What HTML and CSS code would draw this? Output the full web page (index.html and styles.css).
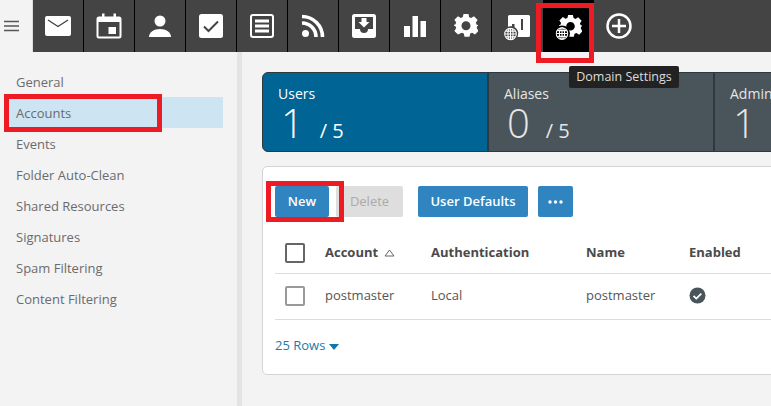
FILE: index.html
```html
<!DOCTYPE html>
<html lang="en">
<head>
<meta charset="utf-8">
<title>Domain Settings</title>
<link rel="stylesheet" href="styles.css">
</head>
<body>
<header class="topbar">
  <button class="menu" aria-label="Menu">
    <svg width="16" height="12" viewBox="0 0 16 12"><path d="M0 1.500h15M0 6h15M0 10.500h15" stroke="#555" stroke-width="1.500"/></svg>
  </button>
  <nav class="tabs">
    <a class="tab"><svg width="28" height="24" viewBox="0 0 28 24"><rect x="1" y="2" width="26" height="20" rx="2" fill="#fff"/><path d="M4 6l10 6.500L24 6" fill="none" stroke="#444" stroke-width="1.400"/></svg></a>
    <a class="tab"><svg width="28" height="28" viewBox="0 0 28 28"><path d="M4 5.500h20a1.500 1.500 0 0 1 1.500 1.500v17a1.500 1.500 0 0 1-1.500 1.500H4A1.500 1.500 0 0 1 2.500 24V7A1.500 1.500 0 0 1 4 5.500z" fill="none" stroke="#fff" stroke-width="2"/><path d="M2 6h24v4H2zM7 1.500h2.500V7H7zM18.500 1.500H21V7h-2.500z" fill="#fff"/><rect x="13.500" y="15" width="7.500" height="7" fill="#fff"/></svg></a>
    <a class="tab"><svg width="24" height="24" viewBox="0 0 24 24"><circle cx="12" cy="7" r="5.500" fill="#fff"/><path d="M1 23c0-5 5-8 11-8s11 3 11 8z" fill="#fff"/></svg></a>
    <a class="tab"><svg width="26" height="26" viewBox="0 0 26 26"><rect x="1" y="1" width="24" height="24" rx="2.500" fill="#fff"/><path d="M6 13.500l4.500 4.500L20 8.500" fill="none" stroke="#444" stroke-width="2"/></svg></a>
    <a class="tab"><svg width="26" height="26" viewBox="0 0 26 26"><rect x="2" y="2" width="22" height="22" rx="2" fill="none" stroke="#fff" stroke-width="2"/><path d="M6 6.500h14v3H6zM6 11.500h14v3H6zM6 16.500h14v3H6z" fill="#fff"/></svg></a>
    <a class="tab"><svg width="24" height="24" viewBox="0 0 24 24"><circle cx="4.500" cy="19.500" r="3.500" fill="#fff"/><path d="M1 9a14 14 0 0 1 14 14M1 2.500A20.500 20.500 0 0 1 21.500 23" fill="none" stroke="#fff" stroke-width="3.600"/></svg></a>
    <a class="tab"><svg width="26" height="26" viewBox="0 0 26 26"><path d="M3.500 1h19A2.500 2.500 0 0 1 25 3.500v19a2.500 2.500 0 0 1-2.500 2.500h-19A2.500 2.500 0 0 1 1 22.500v-19A2.500 2.500 0 0 1 3.500 1zM4 4v12h5a4 4 0 0 0 8 0h5V4z" fill="#fff" fill-rule="evenodd"/><path d="M10.500 5h5v4h3l-5.500 5.500L7.500 9h3z" fill="#fff"/></svg></a>
    <a class="tab"><svg width="24" height="24" viewBox="0 0 24 24"><path d="M1 12h6v11H1zM9.500 2h5.500v21H9.500zM17.500 7h5.500v16h-5.500z" fill="#fff"/></svg></a>
    <a class="tab"><svg width="24" height="24" viewBox="0 0 24 24"><use href="#gear"/></svg></a>
    <a class="tab tab-wide">
      <svg width="30" height="30" viewBox="0 0 30 30"><path d="M6.500 4h19A1.500 1.500 0 0 1 27 5.500v19a1.500 1.500 0 0 1-1.500 1.500H14a7 7 0 0 0-9-10V5.500A1.500 1.500 0 0 1 6.500 4z" fill="#fff"/><path d="M9 13h2.500v6H9zM18 8h2v11h-2z" fill="#444"/><circle cx="7.500" cy="23" r="7.500" fill="#444"/><use href="#globe" x="1" y="16.500" width="13" height="13"/></svg>
    </a>
    <a class="tab tab-active">
      <svg width="30" height="30" viewBox="0 0 30 30"><use href="#gear" x="5" y="4" width="23" height="23"/><circle cx="8" cy="22.500" r="8" fill="#000"/><use href="#globe" x="1.500" y="16" width="13" height="13"/></svg>
    </a>
    <a class="tab"><svg width="28" height="28" viewBox="0 0 28 28"><circle cx="14" cy="14" r="11.500" fill="none" stroke="#fff" stroke-width="2.500"/><path d="M14 7v14M7 14h14" stroke="#fff" stroke-width="2.500"/></svg></a>
  </nav>
</header>

<svg class="defs" width="0" height="0">
  <defs>
    <symbol id="gear" viewBox="0 0 24 24">
      <path fill="#fff" fill-rule="evenodd" d="M9.500 0h5l.7 3.200 2 .9L20 2.300 23.600 6l-1.800 2.800.9 2 3.200.7v0l-2 .5v0l-.7 0-.5 2.100 1.800 2.800-3.500 3.600-2.800-1.800-2 .9-.7 3.200h-5l-.7-3.200-2-.9L4 20.500.4 17l1.800-2.900-.9-2L-1 11.400V11l2.300-.6.9-2L.4 5.700 4 2.200l2.800 1.800 2-.9zM12 7.200a4.500 4.500 0 1 0 0 9 4.500 4.500 0 0 0 0-9z"/>
    </symbol>
    <symbol id="globe" viewBox="0 0 15 15">
      <g fill="none" stroke="#fff" stroke-width="1.200">
        <circle cx="7.500" cy="7.500" r="6.700"/>
        <ellipse cx="7.500" cy="7.500" rx="3" ry="6.700"/>
        <path d="M7.500 1v13M1 7.500h13M2 4.200h11M2 10.800h11"/>
      </g>
    </symbol>
  </defs>
</svg>

<div class="layout">
  <aside class="sidebar">
    <ul class="side-list">
      <li class="side-item">General</li>
      <li class="side-item side-item-active">Accounts</li>
      <li class="side-item">Events</li>
      <li class="side-item">Folder Auto-Clean</li>
      <li class="side-item">Shared Resources</li>
      <li class="side-item">Signatures</li>
      <li class="side-item">Spam Filtering</li>
      <li class="side-item">Content Filtering</li>
    </ul>
  </aside>
  <main class="content">
    <section class="stats">
      <div class="stat stat-primary">
        <div class="stat-label">Users</div>
        <div class="stat-value"><span class="stat-num">1</span><span class="stat-max">/ 5</span></div>
      </div>
      <div class="stat">
        <div class="stat-label">Aliases</div>
        <div class="stat-value"><span class="stat-num">0</span><span class="stat-max">/ 5</span></div>
      </div>
      <div class="stat">
        <div class="stat-label">Admins</div>
        <div class="stat-value"><span class="stat-num">1</span></div>
      </div>
    </section>
    <section class="panel">
      <div class="toolbar">
        <button class="btn">New</button>
        <button class="btn btn-disabled">Delete</button>
        <button class="btn btn-defaults">User Defaults</button>
        <button class="btn btn-more" aria-label="More"><svg width="15" height="4" viewBox="0 0 15 4"><circle cx="2" cy="2" r="1.700" fill="#fff"/><circle cx="7.500" cy="2" r="1.700" fill="#fff"/><circle cx="13" cy="2" r="1.700" fill="#fff"/></svg></button>
      </div>
      <div class="row row-head">
        <span class="cell-check"><span class="check check-head"></span></span>
        <span class="cell-account">Account <svg class="sort" width="11" height="8" viewBox="0 0 11 8"><path d="M5.500 1L10 7H1z" fill="none" stroke="#666"/></svg></span>
        <span class="cell-auth">Authentication</span>
        <span class="cell-name">Name</span>
        <span class="cell-enabled">Enabled</span>
      </div>
      <div class="row row-body">
        <span class="cell-check"><span class="check"></span></span>
        <span class="cell-account">postmaster</span>
        <span class="cell-auth">Local</span>
        <span class="cell-name">postmaster</span>
        <span class="cell-enabled"><svg width="17" height="17" viewBox="0 0 17 17"><circle cx="8.500" cy="8.500" r="8" fill="#4a545b"/><path d="M4.500 8.800l2.800 2.800 5-5" fill="none" stroke="#fff" stroke-width="1.800"/></svg></span>
      </div>
      <a class="rows-link">25 Rows <svg width="10" height="6" viewBox="0 0 10 6"><path d="M0 0h10L5 6z" fill="#1276a6"/></svg></a>
    </section>
  </main>
</div>

<div class="tooltip">Domain Settings</div>
<div class="mark mark-tab"></div>
<div class="mark mark-side"></div>
<div class="mark mark-new"></div>
</body>
</html>
```

FILE: styles.css
```css
* { box-sizing: border-box; }
html, body { margin: 0; height: 100%; }
body {
  width: 771px;
  height: 406px;
  overflow: hidden;
  position: relative;
  background: #f3f3f3;
  color: #555;
  font-family: "Open Sans", sans-serif;
  font-size: 13px;
}
.defs { position: absolute; }
.topbar { display: flex; height: 52px; background: #444; }
.menu {
  width: 33px;
  padding: 0 0 0 4px;
  border: 0;
  background: #f3f3f3;
  border-right: 1px solid #ddd;
  display: flex;
  align-items: center;
  justify-content: flex-start;
}
.tabs { display: flex; flex: 1; }
.tab {
  width: 51px;
  border-right: 1px solid #000;
  display: flex;
  align-items: center;
  justify-content: center;
}
.tab-wide { border-right: 0; }
.tab-active { background: #000; border-right: 0; }

.layout { display: flex; height: 354px; }
.sidebar {
  width: 242px;
  flex: none;
  border-right: 5px solid #e3e3e3;
  padding: 14px 14px 0 0;
}
.side-list { list-style: none; margin: 0; padding: 0; }
.side-item {
  height: 31px;
  line-height: 31px;
  padding: 1px 0 0 16px;
  color: #6b6b6b;
}
.side-item-active { background: #cde4f2; margin-left: 8px; padding-left: 8px; }

.content { flex: 1; min-width: 0; padding: 20px 0 0 20px; overflow: hidden; }
.stats {
  display: flex;
  width: 700px;
  height: 80px;
  border-radius: 6px;
  overflow: hidden;
  background: #2e3a40;
  border: 1px solid #2e3a40;
  gap: 2px;
}
.stat { width: 224px; flex: none; background: #4a545b; color: #e6e6e6; padding: 11px 15px 0; }
.stat-primary { background: #006494; color: #fff; }
.stat-label { font-size: 14px; line-height: 20px; }
.stat-value { display: flex; align-items: baseline; line-height: 38px; padding-left: 3px; }
.stat-num { font-size: 40px; font-weight: 300; }
.stat-max { font-size: 20px; margin-left: 16px; }

.panel {
  margin-top: 14px;
  height: 209px;
  width: 560px;
  background: #fff;
  border: 1px solid #d4d4d4;
  border-radius: 5px;
  padding: 19px 0 0 12px;
}
.toolbar { display: flex; height: 31px; }
.btn {
  height: 31px;
  width: 54px;
  border: 0;
  border-radius: 2px;
  background: #3085c0;
  color: #fff;
  font: 600 13px "Open Sans", sans-serif;
  padding: 0 0 2px;
}
.btn-disabled { margin-left: 7px; width: 67px; background: #dedede; color: #aaa; font-weight: 500; }
.btn-defaults { margin-left: 15px; width: 110px; }
.btn-more { margin-left: 10px; width: 35px; padding: 0; display: flex; align-items: center; justify-content: center; }

.row { display: flex; align-items: center; border-bottom: 1px solid #dcdcdc; color: #555; padding-bottom: 1px; }
.row-head { height: 40px; margin-top: 17px; font-weight: 700; color: #4a4a4a; }
.row-body { height: 46px; }
.cell-check { width: 50px; padding-left: 10px; display: flex; }
.cell-account { width: 106px; padding-bottom: 2px; }
.cell-auth { width: 155px; padding-bottom: 2px; }
.cell-name { width: 103px; padding-bottom: 2px; }
.cell-enabled { display: flex; white-space: nowrap; padding-bottom: 2px; }
.sort { margin-left: 2px; }
.check { width: 20px; height: 20px; border: 2px solid #999; border-radius: 2px; background: #fff; }
.check-head { border-color: #666; }
.rows-link { display: block; margin-top: 16px; color: #1b7aa8; }

.tooltip {
  position: absolute;
  left: 569px;
  top: 66px;
  width: 110px;
  height: 22px;
  line-height: 21px;
  text-align: center;
  font-size: 12.5px;
  background: #222;
  color: #ddd;
  border-radius: 2px;
}
.mark { position: absolute; border: 5px solid #ed1c24; }
.mark-tab { left: 536px; top: 3px; width: 58px; height: 60px; }
.mark-side { left: 4px; top: 94px; width: 158px; height: 38px; }
.mark-new { left: 266px; top: 181px; width: 78px; height: 41px; }
```
